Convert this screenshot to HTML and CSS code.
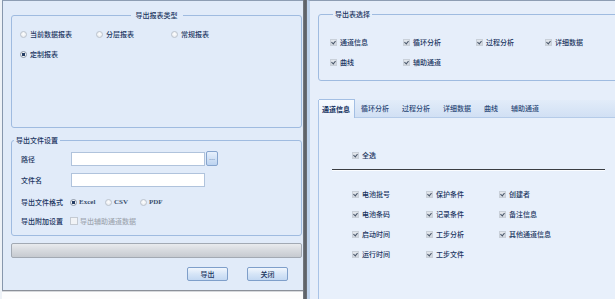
FILE: index.html
```html
<!DOCTYPE html>
<html lang="zh">
<head>
<meta charset="utf-8">
<link rel="stylesheet" href="styles.css">
</head>
<body>
<div class="screen">
  <div class="gutter"></div>
  <div class="left-col">
    <div class="win-left">
      <fieldset class="grp grp-type">
        <legend class="legend-center">导出报表类型</legend>
        <div class="radio-grid">
          <label class="opt"><span class="radio"></span>当前数据报表</label>
          <label class="opt"><span class="radio"></span>分层报表</label>
          <label class="opt"><span class="radio"></span>常规报表</label>
          <label class="opt"><span class="radio on"></span>定制报表</label>
        </div>
      </fieldset>
      <fieldset class="grp grp-file">
        <legend class="legend-left">导出文件设置</legend>
        <div class="form-row r1"><span class="lbl">路径</span><span class="input"></span><span class="browse">…</span></div>
        <div class="form-row r2"><span class="lbl">文件名</span><span class="input"></span></div>
        <div class="form-row r3"><span class="lbl">导出文件格式</span>
          <label class="fmt"><span class="radio on"></span><span class="latin">Excel</span></label>
          <label class="fmt"><span class="radio"></span><span class="latin">CSV</span></label>
          <label class="fmt"><span class="radio"></span><span class="latin">PDF</span></label>
        </div>
        <div class="form-row r4"><span class="lbl">导出附加设置</span><label class="opt disabled"><span class="cb-dis"></span>导出辅助通道数据</label></div>
      </fieldset>
      <div class="progress"></div>
      <div class="actions"><button class="btn">导出</button><button class="btn">关闭</button></div>
    </div>
    <div class="below"></div>
  </div>
  <div class="divider"></div>
  <div class="win-right">
    <fieldset class="grp grp-select">
      <legend class="legend-left2">导出表选择</legend>
      <div class="cb-grid">
        <label class="opt"><span class="cb"></span>通道信息</label>
        <label class="opt"><span class="cb"></span>循环分析</label>
        <label class="opt"><span class="cb"></span>过程分析</label>
        <label class="opt"><span class="cb"></span>详细数据</label>
        <label class="opt"><span class="cb"></span>曲线</label>
        <label class="opt"><span class="cb"></span>辅助通道</label>
      </div>
    </fieldset>
    <div class="tabs">
      <div class="tab-head">
        <span class="tab active">通道信息</span>
        <span class="tab">循环分析</span>
        <span class="tab">过程分析</span>
        <span class="tab">详细数据</span>
        <span class="tab">曲线</span>
        <span class="tab">辅助通道</span>
      </div>
      <div class="tab-body">
        <label class="opt all"><span class="cb"></span>全选</label>
        <div class="sep"></div>
        <div class="field-grid">
          <label class="opt"><span class="cb"></span>电池批号</label>
          <label class="opt"><span class="cb"></span>保护条件</label>
          <label class="opt"><span class="cb"></span>创建者</label>
          <label class="opt"><span class="cb"></span>电池条码</label>
          <label class="opt"><span class="cb"></span>记录条件</label>
          <label class="opt"><span class="cb"></span>备注信息</label>
          <label class="opt"><span class="cb"></span>启动时间</label>
          <label class="opt"><span class="cb"></span>工步分析</label>
          <label class="opt"><span class="cb"></span>其他通道信息</label>
          <label class="opt"><span class="cb"></span>运行时间</label>
          <label class="opt"><span class="cb"></span>工步文件</label>
        </div>
      </div>
    </div>
  </div>
</div>
</body>
</html>
```

FILE: styles.css
```css
* { box-sizing: border-box; margin: 0; padding: 0; }
html, body { width: 615px; height: 299px; overflow: hidden; background: #fff; }
body {
  font-family: "Noto Sans CJK SC", "Noto Sans", sans-serif;
  font-size: 7px;
  font-weight: 500;
  line-height: 12px;
  color: #1a3560;
}
.screen { display: flex; height: 299px; }
.gutter { width: 2px; background: #eef2f7; }
.left-col { width: 301px; display: flex; flex-direction: column; }
.win-left {
  height: 291px;
  background: #e1ebf9;
  border-left: 1px solid #8797ad;
  border-top: 1px solid #8d9db3;
  border-bottom: 1px solid #8b9099;
  padding: 0 1px 0 8px;
}
.below {
  flex: 1;
  background: #fdfdfd;
  border-top: 1px solid #d6d8db;
}
.divider { width: 4px; background: linear-gradient(90deg, #7a7f86, #595d63, #6f747b); }
.win-right {
  flex: 1;
  background: #e6eefa;
  border-left: 3px solid #bfd3ec;
  border-top: 1px solid #8d9db3;
  overflow: hidden;
  padding-left: 8px;
}

/* group boxes */
.grp {
  border: 1px solid #9fbbe0;
  border-radius: 3px;
  min-width: 0;
}
.grp legend { line-height: 10px; font-size: 7px; padding: 0 5px; }
.legend-center { margin: 0 auto; }
.legend-left { margin-left: -7px; padding: 0 2px !important; }
.legend-left2 { margin-left: 3px; padding: 0 2px !important; }

.grp-type { margin-top: 9px; height: 118px; padding: 8px 8px 0 8px; }
.radio-grid { display: grid; grid-template-columns: 76px 75px 76px; row-gap: 8px; }

.opt { display: flex; align-items: center; height: 12px; white-space: nowrap; }
.radio {
  width: 7px; height: 7px; border-radius: 50%;
  border: 1px solid #bcc3cd;
  background: radial-gradient(circle at 50% 40%, #ffffff, #dfe3e9);
  margin-right: 3px; flex: none;
}
.radio.on { border-color: #8c96a4; background: radial-gradient(circle, #243c63 0 1.6px, #f3f5f8 2px, #dde2e8); }

.grp-file { margin-top: 7px; height: 101px; padding: 6px 8px 0 9px; }
.form-row { display: flex; align-items: center; }
.lbl { width: 49px; flex: none; }
.r1 { height: 15px; }
.r2 { height: 14px; margin-top: 7px; }
.r3 { height: 12px; margin-top: 9px; }
.r4 { height: 12px; margin-top: 7px; }
.input {
  width: 134px; height: 14px; margin-left: 1px;
  background: #fff; border: 1px solid #b0c3dc;
}
.browse {
  width: 12px; height: 15px; margin-left: 1px; overflow: hidden;
  border: 1px solid #86a4cd; border-radius: 2px;
  background: linear-gradient(#e7f0fc, #bcd3f0);
  font-family: "DejaVu Sans", sans-serif;
  font-size: 6px; line-height: 11px; text-align: center; color: #3d5c8a;
}
.fmt { display: flex; align-items: center; width: 35px; height: 12px; }
.latin { font-family: "Liberation Serif", serif; font-size: 7px; font-weight: bold; color: #3b4f6e; }
.fmt .radio { margin-right: 2px; }
.disabled { color: #a0a7b1; }
.cb-dis {
  width: 8px; height: 8px; border: 1px solid #c4cad2; background: #f1f3f6;
  margin-right: 2px; flex: none;
}

.progress {
  margin-top: 7px; height: 15px;
  border: 1px solid #a2a9b3; border-radius: 2px;
  background: linear-gradient(#e9ebee, #d6d9de 50%, #c6cad0);
}
.actions { display: flex; justify-content: flex-end; gap: 19px; padding-right: 14px; margin-top: 9px; }
.btn {
  width: 41px; height: 14px;
  border: 1px solid #7f9fca; border-radius: 2px;
  background: linear-gradient(#f1f6fd, #d6e5f7 50%, #c3d8f2);
  font-family: inherit; font-size: 7px; font-weight: 500; line-height: 12px; color: #1a3560;
}

/* right window */
.grp-select { margin-top: 8px; width: 320px; height: 72px; padding: 17px 0 0 11px; }
.cb-grid { display: grid; grid-template-columns: 73px 73px 69px 80px; row-gap: 8px; }
.cb {
  width: 7px; height: 7px; flex: none; margin-right: 3px;
  background: linear-gradient(#e3e7ec, #cfd5dd);
  border: 1px solid #c9d0d9;
  position: relative;
}
.cb::after {
  content: ""; position: absolute; left: 1px; top: 0;
  width: 2px; height: 3px;
  border-right: 1px solid #49566a; border-bottom: 1px solid #49566a;
  transform: rotate(40deg);
}

.tabs { margin-top: 19px; border-left: 1px solid #a9c3e6; }
.tab-head {
  display: flex; height: 18px; align-items: flex-end;
  background: linear-gradient(#e2ecf9, #d1e0f4);
  border-bottom: 1px solid #b5cbe8;
}
.tab { height: 17px; line-height: 16px; padding: 0 7px 0 6px; color: #2c4a78; }
.tab.active {
  height: 19px; margin-bottom: -1px; padding: 0 4px 0 3px;
  font-weight: bold; color: #15325f;
  background: linear-gradient(#f7fbff, #e8f0fb);
  border: 1px solid #a3bfe4; border-left: none; border-bottom: none;
  line-height: 18px;
}
.tab-body { height: 181px; background: #e8f0fb; padding: 31px 0 0 33px; }
.all { height: 12px; }
.sep {
  margin: 8px 10px 0 -20px; height: 2px;
  border-top: 1px solid #3a3d42; border-bottom: 1px solid #fbfdff;
}
.field-grid { margin-top: 17px; display: grid; grid-template-columns: 74px 73px 80px; row-gap: 8px; }
```
